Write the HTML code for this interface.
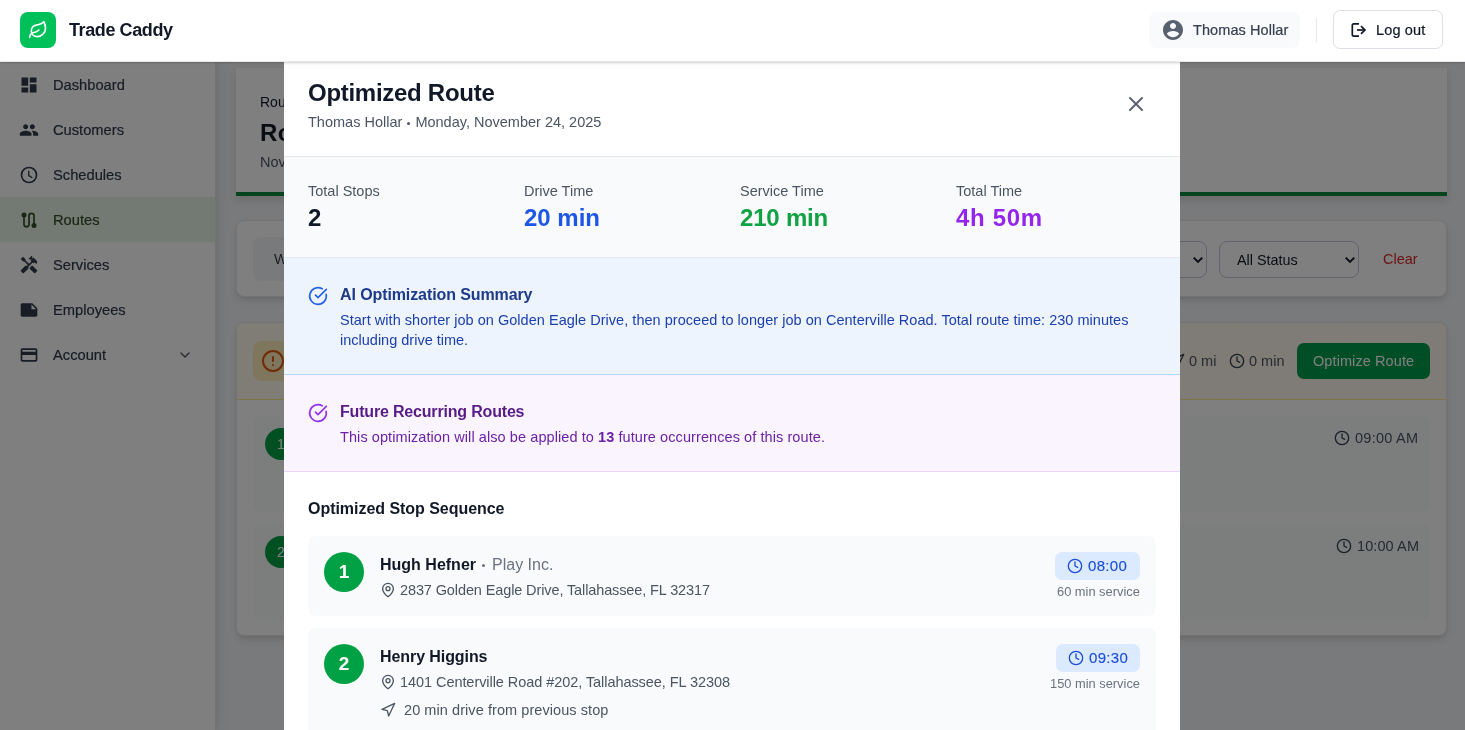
<!DOCTYPE html>
<html lang="en">
<head>
<meta charset="utf-8">
<title>Trade Caddy - Optimized Route</title>
<style>
*{box-sizing:border-box;margin:0;padding:0}
html,body{width:1465px;height:730px;overflow:hidden;background:#f3f4f6;font-family:"Liberation Sans",sans-serif;color:#111827}
.a{position:absolute}
.t{position:absolute;white-space:nowrap;line-height:1}
.t,.num,.bnum{will-change:transform}
svg{position:absolute;display:block;overflow:visible}
.ic{fill:none;stroke:currentColor;stroke-width:2;stroke-linecap:round;stroke-linejoin:round}

/* header */
#hdr{position:absolute;left:0;top:0;width:1465px;height:62px;background:#fff;border-bottom:1px solid #e5e7eb;z-index:30;box-shadow:0 1px 3px rgba(0,0,0,.12),0 1px 2px rgba(0,0,0,.07)}
#logo{left:20px;top:12px;width:36px;height:36px;border-radius:8px;background:#00c05a;color:#fff}
#userpill{left:1149px;top:12px;width:151px;height:36px;border-radius:8px;background:#f9fafb}
#logout{left:1333px;top:10px;width:110px;height:39px;border-radius:7px;border:1px solid #dcdfe6;background:#fff}

/* sidebar */
#side{left:0;top:62px;width:216px;height:668px;background:#fff;border-right:1px solid #e2e8e2;box-shadow:3px 0 14px rgba(0,0,0,.075),1px 0 3px rgba(0,0,0,.04)}
.nav{position:absolute;left:0;width:215px;height:45px;color:#2f394b}
.nav.on{background:#e6f4e6;color:#324e28}
.nav .t{left:53px;top:16.4px;font-size:14.7px;font-weight:400;-webkit-text-stroke:.2px currentColor}
.nav svg{left:19px;top:12.75px;width:20px;height:20px}

/* page */
.card{position:absolute;background:#fff;border:1px solid #e5e7eb;border-radius:8px;box-shadow:0 4px 8px -1px rgba(0,0,0,.12),0 2px 4px -2px rgba(0,0,0,.1)}

/* overlay + modal */
#ov{left:0;top:62px;width:1465px;height:668px;background:rgba(0,0,0,.5);z-index:10}
#modal{left:284px;top:62px;width:896px;height:668px;background:#fff;z-index:20;overflow:hidden}

.lab{top:122px;font-size:14.5px;color:#4b5563}
.val{top:144px;font-size:24px;font-weight:700}
.stop{left:24px;width:848px;background:#f9fafb;border-radius:8px}
.num{left:40px;width:40px;height:40px;border-radius:50%;background:#00a145;color:#fff;font-weight:700;font-size:19px;text-align:center;line-height:40px}
.pin{width:16px;height:16px;color:#4b5563}
.addr{font-size:14.5px;color:#4b5563}
.badge{height:28px;border-radius:7px;background:#dbeafe}
.clk{width:16px;height:16px;color:#1d4ed8}
.btime{font-size:15px;color:#1d4ed8;letter-spacing:.3px;-webkit-text-stroke:.15px currentColor}
.svc{font-size:12.85px;color:#6b7280}

.sel{border:1px solid #c6c9d6;border-radius:8px;background:#fff}
.bnum{left:265px;width:32px;height:32px;border-radius:50%;background:#00a145;color:#fff;font-weight:400;font-size:14px;text-align:center;line-height:32px}
.md{-webkit-text-stroke:.2px currentColor}
.dot{display:inline-block;width:3px;height:3px;border-radius:50%;background:currentColor;vertical-align:.16em}
</style>
</head>
<body>

<!-- ================= HEADER ================= -->
<div id="hdr">
  <div id="logo" class="a">
    <svg class="ic" viewBox="0 0 24 24" style="left:8px;top:8px;width:20px;height:20px"><path d="M11 20A7 7 0 0 1 9.8 6.1C15.5 5 17 4.48 19 2c1 2 2 4.18 2 8 0 5.5-4.78 10-10 10Z"/><path d="M2 21c0-3 1.85-5.36 5.08-6C9.5 14.52 12 13 13 12"/></svg>
  </div>
  <span class="t" id="brand" style="left:69px;top:21px;font-size:18px;font-weight:700;letter-spacing:-.4px;color:#111827">Trade Caddy</span>

  <div id="userpill" class="a"></div>
  <svg viewBox="0 0 24 24" style="left:1161px;top:18px;width:24px;height:24px;color:#596171"><path fill="currentColor" d="M12 2C6.48 2 2 6.48 2 12s4.48 10 10 10 10-4.480 10-10S17.520 2 12 2zm0 3c1.660 0 3 1.340 3 3s-1.340 3-3 3-3-1.340-3-3 1.340-3 3-3zm0 14.200c-2.500 0-4.710-1.280-6-3.220.030-1.990 4-3.080 6-3.080 1.990 0 5.970 1.090 6 3.080-1.290 1.940-3.500 3.220-6 3.220z"/></svg>
  <span class="t md" id="uname" style="left:1193px;top:23px;font-size:14.5px;letter-spacing:.08px;color:#374151">Thomas Hollar</span>
  <div class="a" style="left:1316px;top:18px;width:1px;height:24px;background:#e5e7eb"></div>
  <div id="logout" class="a"></div>
  <svg viewBox="0 0 20 20" style="left:1349px;top:20px;width:20px;height:20px;color:#111827;fill:none;stroke:currentColor;stroke-width:1.7;stroke-linecap:butt;stroke-linejoin:miter"><path d="M10 3.850H4.600a1.300 1.300 0 0 0-1.300 1.300v9.700a1.300 1.300 0 0 0 1.300 1.300H10" stroke-linejoin="round"/><path d="M8 10h7.800"/><path d="M12 6.100l3.900 3.900-3.900 3.900"/></svg>
  <span class="t md" id="lo" style="left:1376px;top:22.8px;font-size:14.5px;letter-spacing:.15px;color:#111827">Log out</span>
</div>

<!-- ================= SIDEBAR ================= -->
<div id="side" class="a">
  <div class="nav" style="top:0"><svg viewBox="0 0 24 24"><path fill="currentColor" d="M3 13h8V3H3v10zm0 8h8v-6H3v6zm10 0h8V11h-8v10zm0-18v6h8V3h-8z"/></svg><span class="t">Dashboard</span></div>
  <div class="nav" style="top:45px"><svg viewBox="0 0 24 24"><path fill="currentColor" d="M16 11c1.660 0 2.990-1.340 2.990-3S17.660 5 16 5c-1.660 0-3 1.340-3 3s1.340 3 3 3zm-8 0c1.660 0 2.990-1.340 2.990-3S9.660 5 8 5C6.340 5 5 6.340 5 8s1.340 3 3 3zm0 2c-2.330 0-7 1.170-7 3.500V19h14v-2.500c0-2.330-4.670-3.500-7-3.500zm8 0c-.290 0-.620.020-.970.050 1.160.840 1.970 1.970 1.970 3.450V19h6v-2.500c0-2.330-4.670-3.500-7-3.500z"/></svg><span class="t">Customers</span></div>
  <div class="nav" style="top:90px"><svg class="ic" viewBox="0 0 24 24"><circle cx="12" cy="12" r="9"/><polyline points="11.750 7 11.750 12.700 16 15.300" stroke-width="1.600" stroke-linecap="butt"/></svg><span class="t">Schedules</span></div>
  <div class="nav on" style="top:135px"><svg class="ic" viewBox="0 0 24 24"><circle cx="6" cy="6" r="2" fill="currentColor"/><circle cx="18" cy="18.500" r="2" fill="currentColor"/><path d="M6 7v10a3 3 0 0 0 6 0V7a3 3 0 0 1 6 0v10"/></svg><span class="t">Routes</span></div>
  <div class="nav" style="top:180px"><svg viewBox="0 0 24 24"><path fill="currentColor" d="M21.670 18.170l-5.300-5.300h-.990l-2.540 2.540v.990l5.300 5.300c.390.390 1.020.390 1.410 0l2.120-2.120c.390-.380.390-1.020 0-1.410zM17.340 10.190l1.410-1.410 2.120 2.120c1.170-1.170 1.170-3.070 0-4.240l-3.540-3.540-1.410 1.410V1.710l-.700-.710-3.540 3.540.710.710h2.830l-1.410 1.410 1.060 1.060-2.890 2.890-4.130-4.130V5.060L4.830 2.040 2 4.870 5.030 7.900h1.410l4.130 4.130-.850.850H7.600l-5.300 5.300c-.390.390-.390 1.020 0 1.410l2.120 2.120c.390.390 1.020.390 1.410 0l5.300-5.300v-2.120l5.150-5.150 1.060 1.050z"/></svg><span class="t">Services</span></div>
  <div class="nav" style="top:225px"><svg viewBox="0 0 24 24"><path fill="currentColor" d="M22 10l-6-6H4c-1.100 0-2 .900-2 2v12.010c0 1.100.900 1.990 2 1.990l16-.010c1.100 0 2-.890 2-1.990v-8zm-7-4.500l5.500 5.500H15V5.500z"/></svg><span class="t">Employees</span></div>
  <div class="nav" style="top:270px"><svg viewBox="0 0 24 24"><path fill="currentColor" d="M20 4H4c-1.110 0-1.990.890-1.990 2L2 18c0 1.110.890 2 2 2h16c1.110 0 2-.890 2-2V6c0-1.110-.890-2-2-2zm0 14H4v-6h16v6zm0-10H4V6h16v2z"/></svg><span class="t">Account</span>
    <svg class="ic" viewBox="0 0 24 24" style="left:177px;top:15px;width:16px;height:16px;color:#4b5563"><polyline points="6 9 12 15 18 9"/></svg></div>
</div>

<!-- ================= PAGE (behind overlay) ================= -->
<div id="page">
  <!-- page header card -->
  <div class="a" style="left:236px;top:68px;width:1211px;height:128px;background:#fff;border-bottom:4px solid #0b8a3a;box-shadow:0 4px 8px rgba(0,0,0,.12)"></div>
  <span class="t" style="left:260px;top:95px;font-size:14px;color:#111827">Routes</span>
  <span class="t" style="left:260px;top:121px;font-size:24px;font-weight:700;letter-spacing:.3px;color:#111827">Routes</span>
  <span class="t" style="left:260px;top:155px;font-size:14.5px;color:#4b5563">November 24, 2025</span>

  <!-- filter card -->
  <div class="card" style="left:236px;top:220px;width:1211px;height:77px"></div>
  <div class="a" style="left:253px;top:237px;width:200px;height:44px;border-radius:8px;background:#f3f4f6"></div>
  <span class="t" style="left:274px;top:252px;font-size:14.5px;color:#374151">Week</span>
  <div class="a sel" style="left:1067px;top:241px;width:140px;height:37px"></div>
  <svg viewBox="0 0 12 8" style="left:1192px;top:255.500px;width:12px;height:8px;color:#111827;fill:none;stroke:currentColor;stroke-width:2"><polyline points="1.700 1.600 6 5.900 10.300 1.600"/></svg>
  <div class="a sel" style="left:1219px;top:241px;width:140px;height:37px"></div>
  <span class="t" style="left:1237px;top:252.600px;font-size:14.4px;color:#111827">All Status</span>
  <svg viewBox="0 0 12 8" style="left:1343.600px;top:255.500px;width:12px;height:8px;color:#111827;fill:none;stroke:currentColor;stroke-width:2"><polyline points="1.700 1.600 6 5.900 10.300 1.600"/></svg>
  <span class="t" style="left:1383px;top:252px;font-size:14.5px;color:#dc2626">Clear</span>

  <!-- route card -->
  <div class="card" style="left:236px;top:322px;width:1211px;height:314px;overflow:hidden">
    <div class="a" style="left:0;top:0;width:1210px;height:77px;background:linear-gradient(90deg,#fffbeb,#fff7ed);border-bottom:1px solid #fde68a"></div>
  </div>
  <div class="a" style="left:253px;top:341px;width:40px;height:40px;border-radius:8px;background:#fdefba"></div>
  <svg class="ic" viewBox="0 0 24 24" style="left:261px;top:349px;width:24px;height:24px;color:#e2560c"><circle cx="12" cy="12" r="10"/><line x1="12" y1="8" x2="12" y2="12"/><line x1="12" y1="16" x2="12.010" y2="16"/></svg>
  <svg class="ic" viewBox="0 0 24 24" style="left:1169px;top:353px;width:16px;height:16px;color:#374151"><polygon points="3 11 22 2 13 21 11 13 3 11"/></svg>
  <span class="t" style="left:1189px;top:354px;font-size:14.5px;color:#4b5563">0 mi</span>
  <svg class="ic" viewBox="0 0 24 24" style="left:1229px;top:353px;width:16px;height:16px;color:#374151"><circle cx="12" cy="12" r="10"/><polyline points="12 6 12 12 16 14"/></svg>
  <span class="t" style="left:1249px;top:354px;font-size:14.5px;color:#4b5563">0 min</span>
  <div class="a" style="left:1297px;top:343px;width:133px;height:36px;border-radius:7px;background:#009c4c"></div>
  <span class="t" style="left:1313px;top:354px;font-size:14.5px;letter-spacing:.09px;color:#fff">Optimize Route</span>

  <div class="a" style="left:253px;top:416px;width:1178px;height:96px;border-radius:8px;background:#f9fafb"></div>
  <div class="a bnum" style="top:428px">1</div>
  <svg class="ic" viewBox="0 0 24 24" style="left:1334px;top:430px;width:16px;height:16px;color:#374151"><circle cx="12" cy="12" r="10"/><polyline points="12 6 12 12 16 14"/></svg>
  <span class="t" style="left:1354.500px;top:431px;font-size:14.5px;letter-spacing:.25px;color:#4b5563">09:00 AM</span>

  <div class="a" style="left:253px;top:524px;width:1178px;height:96px;border-radius:8px;background:#f9fafb"></div>
  <div class="a bnum" style="top:536px">2</div>
  <svg class="ic" viewBox="0 0 24 24" style="left:1336px;top:538px;width:16px;height:16px;color:#374151"><circle cx="12" cy="12" r="10"/><polyline points="12 6 12 12 16 14"/></svg>
  <span class="t" style="left:1357px;top:539px;font-size:14.5px;letter-spacing:.1px;color:#4b5563">10:00 AM</span>
</div>

<div id="ov" class="a"></div>

<!-- ================= MODAL ================= -->
<div id="modal" class="a">
  <!-- header (coords relative to modal: modal origin = 284,62) -->
  <span class="t" id="m_title" style="left:24px;top:19px;font-size:24px;font-weight:700;letter-spacing:-.28px;color:#111827">Optimized Route</span>
  <span class="t" id="m_sub" style="left:24px;top:53px;font-size:14.5px;color:#4b5563">Thomas Hollar <i class="dot" style="margin:0 1.040px"></i> Monday, November 24, 2025</span>
  <svg class="ic" viewBox="0 0 24 24" style="left:840px;top:30px;width:24px;height:24px;color:#5b6372;stroke-width:2"><line x1="18" y1="6" x2="6" y2="18"/><line x1="6" y1="6" x2="18" y2="18"/></svg>
  <div class="a" style="left:0;top:94px;width:896px;height:1px;background:#e5e7eb"></div>

  <!-- stats -->
  <div class="a" style="left:0;top:95px;width:896px;height:100px;background:#f9fafb"></div>
  <div class="a" style="left:0;top:195px;width:896px;height:1px;background:#e5e7eb"></div>
  <span class="t lab" style="left:24px">Total Stops</span>
  <span class="t val" style="left:24px;color:#111827">2</span>
  <span class="t lab" style="left:240px">Drive Time</span>
  <span class="t val" style="left:240px;color:#1d57e6">20 min</span>
  <span class="t lab" style="left:456px">Service Time</span>
  <span class="t val" style="left:456px;color:#10a243;letter-spacing:-.2px">210 min</span>
  <span class="t lab" style="left:672px">Total Time</span>
  <span class="t val" style="left:672px;color:#9325ee;letter-spacing:.7px">4h 50m</span>

  <!-- AI summary -->
  <div class="a" style="left:0;top:196px;width:896px;height:116px;background:#edf4fe"></div>
  <div class="a" style="left:0;top:312px;width:896px;height:1px;background:#b6d5fb"></div>
  <svg class="ic" viewBox="0 0 24 24" style="left:24px;top:224px;width:20px;height:20px;color:#2563eb"><path d="M21.801 10A10 10 0 1 1 17 3.335"/><path d="m9 11 3 3L22 4"/></svg>
  <span class="t" id="ai_h" style="left:56px;top:225px;font-size:16px;font-weight:700;letter-spacing:-.1px;color:#1e3a8a">AI Optimization Summary</span>
  <span class="t" id="ai_1" style="left:56px;top:251px;font-size:14.5px;letter-spacing:.03px;color:#1e40af">Start with shorter job on Golden Eagle Drive, then proceed to longer job on Centerville Road. Total route time: 230 minutes</span>
  <span class="t" id="ai_2" style="left:56px;top:271px;font-size:14.5px;color:#1e40af">including drive time.</span>

  <!-- Future recurring -->
  <div class="a" style="left:0;top:313px;width:896px;height:96px;background:#f9f4fe"></div>
  <div class="a" style="left:0;top:409px;width:896px;height:1px;background:#e9d5ff"></div>
  <svg class="ic" viewBox="0 0 24 24" style="left:24px;top:341px;width:20px;height:20px;color:#9333ea"><path d="M21.801 10A10 10 0 1 1 17 3.335"/><path d="m9 11 3 3L22 4"/></svg>
  <span class="t" id="fr_h" style="left:56px;top:342px;font-size:16px;font-weight:700;letter-spacing:-.18px;color:#581c87">Future Recurring Routes</span>
  <span class="t" id="fr_1" style="left:56px;top:368px;font-size:14.5px;letter-spacing:.08px;color:#6b21a8">This optimization will also be applied to <b>13</b> future occurrences of this route.</span>

  <!-- stop sequence -->
  <span class="t" id="seq_h" style="left:24px;top:439px;font-size:16px;font-weight:700;letter-spacing:-.04px;color:#111827">Optimized Stop Sequence</span>

  <div class="a stop" style="top:474px;height:80px"></div>
  <div class="a num" style="top:490px">1</div>
  <span class="t" id="s1_n" style="left:96px;top:495px;font-size:16px;font-weight:700;color:#111827">Hugh Hefner</span>
  <span class="t" id="s1_c" style="left:197px;top:495px;font-size:16px;color:#6b7280"><i class="dot" style="margin:0 2.300px 0 1.300px"></i> Play Inc.</span>
  <svg class="ic pin" viewBox="0 0 24 24" style="left:96px;top:520px"><path d="M20 10c0 4.993-5.539 10.193-7.399 11.799a1 1 0 0 1-1.202 0C9.539 20.193 4 14.993 4 10a8 8 0 0 1 16 0"/><circle cx="12" cy="10" r="3"/></svg>
  <span class="t addr" id="s1_a" style="left:116px;top:521px;letter-spacing:-.115px">2837 Golden Eagle Drive, Tallahassee, FL 32317</span>
  <div class="a badge" style="left:771px;top:490px;width:85px"></div>
  <svg class="ic clk" viewBox="0 0 24 24" style="left:783px;top:496px"><circle cx="12" cy="12" r="10"/><polyline points="12 6 12 12 16 14"/></svg>
  <span class="t btime" id="s1_t" style="left:804px;top:495.700px">08:00</span>
  <span class="t svc" id="s1_s" style="right:40.500px;top:524px">60 min service</span>

  <div class="a stop" style="top:566px;height:120px"></div>
  <div class="a num" style="top:582px">2</div>
  <span class="t" id="s2_n" style="left:96px;top:587px;font-size:16px;font-weight:700;letter-spacing:-.08px;color:#111827">Henry Higgins</span>
  <svg class="ic pin" viewBox="0 0 24 24" style="left:96px;top:612px"><path d="M20 10c0 4.993-5.539 10.193-7.399 11.799a1 1 0 0 1-1.202 0C9.539 20.193 4 14.993 4 10a8 8 0 0 1 16 0"/><circle cx="12" cy="10" r="3"/></svg>
  <span class="t addr" id="s2_a" style="left:116px;top:613px;letter-spacing:-.06px">1401 Centerville Road #202, Tallahassee, FL 32308</span>
  <svg class="ic pin" viewBox="0 0 24 24" style="left:96px;top:640px"><polygon points="3 11 22 2 13 21 11 13 3 11"/></svg>
  <span class="t addr" id="s2_d" style="left:120px;top:641px;letter-spacing:.07px">20 min drive from previous stop</span>
  <div class="a badge" style="left:772px;top:582px;width:84px"></div>
  <svg class="ic clk" viewBox="0 0 24 24" style="left:784px;top:588px"><circle cx="12" cy="12" r="10"/><polyline points="12 6 12 12 16 14"/></svg>
  <span class="t btime" id="s2_t" style="left:805px;top:587.700px">09:30</span>
  <span class="t svc" id="s2_s" style="right:40.500px;top:616px">150 min service</span>
</div>

</body>
</html>
